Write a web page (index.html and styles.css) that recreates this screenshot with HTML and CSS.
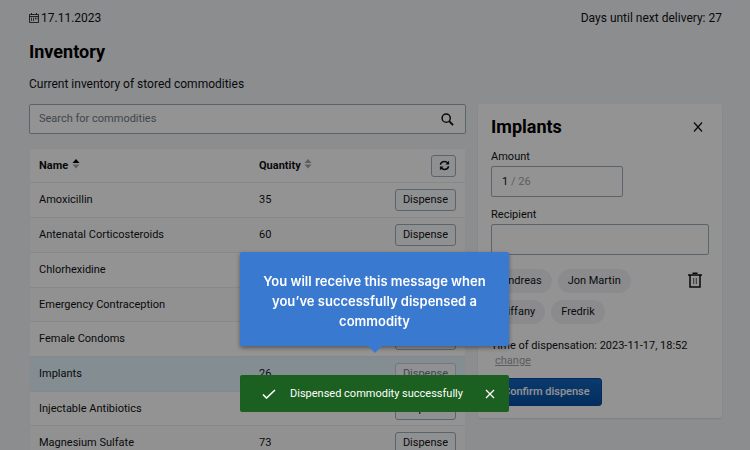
FILE: index.html
```html
<!DOCTYPE html>
<html lang="en">
<head>
<meta charset="utf-8">
<title>Inventory</title>
<link rel="stylesheet" href="styles.css">
</head>
<body>
<main class="page">
  <header class="topbar">
    <span class="date">
      <svg class="icon-cal" viewBox="0 0 10 10" fill="none" stroke="currentColor"><path d="M.5 1.500h9v8h-9zM.5 3.500h9M2.500 0v2M7.500 0v2" stroke-width=".8"/><path d="M2.500 4.500v3.500M4.500 4.500v3.500M6.500 4.500v2M8 4.500v2" stroke-width=".7"/></svg>17.11.2023
    </span>
    <span>Days until next delivery: 27</span>
  </header>
  <h1>Inventory</h1>
  <p class="intro">Current inventory of stored commodities</p>
  <div class="columns">
    <section class="stock">
      <div class="search">
        <input type="search" aria-label="Search for commodities" placeholder="Search for commodities">
        <svg class="icon-search" viewBox="0 0 14 14" fill="none" stroke="currentColor" stroke-width="1.600"><circle cx="5.600" cy="5.600" r="4.400"/><path d="M8.900 8.900 13 13" stroke-width="2"/></svg>
      </div>
      <table class="list">
        <thead>
          <tr>
            <th class="name">Name <svg class="icon-sort" viewBox="0 0 8 10"><path d="M4 0 7.500 4h-7z"/><path class="muted" d="M4 9.500.5 5.500h7z"/></svg></th>
            <th class="qty">Quantity <svg class="icon-sort" viewBox="0 0 8 10"><path class="muted" d="M4 0 7.500 4h-7zM4 9.500.5 5.500h7z"/></svg></th>
            <th class="act"><button class="btn refresh" aria-label="Refresh"><svg class="icon-refresh" viewBox="0 0 12 12" fill="none" stroke="currentColor" stroke-width="1.600"><path d="M1.500 5.200C2 3 3.800 1.700 6 1.700c1.500 0 2.800.7 3.700 1.900M10.500 6.800C10 9 8.200 10.300 6 10.300c-1.500 0-2.800-.7-3.700-1.900"/><path d="M11 .8v4H7zM1 11.200v-4h4z" fill="currentColor" stroke="none"/></svg></button></th>
          </tr>
        </thead>
        <tbody>
          <tr><td>Amoxicillin</td><td>35</td><td class="act"><button class="btn">Dispense</button></td></tr>
          <tr><td>Antenatal Corticosteroids</td><td>60</td><td class="act"><button class="btn">Dispense</button></td></tr>
          <tr><td>Chlorhexidine</td><td></td><td class="act"></td></tr>
          <tr><td>Emergency Contraception</td><td></td><td class="act"></td></tr>
          <tr><td>Female Condoms</td><td></td><td class="act"><button class="btn">Dispense</button></td></tr>
          <tr class="selected"><td>Implants</td><td>26</td><td class="act"><button class="btn" disabled>Dispense</button></td></tr>
          <tr><td>Injectable Antibiotics</td><td></td><td class="act"><button class="btn">Dispense</button></td></tr>
          <tr><td>Magnesium Sulfate</td><td>73</td><td class="act"><button class="btn">Dispense</button></td></tr>
        </tbody>
      </table>
    </section>
    <section class="panel">
      <div class="panel-head">
        <h2>Implants</h2>
        <button class="plain" aria-label="Close"><svg class="icon-x" viewBox="0 0 10 10" fill="none" stroke="currentColor" stroke-width="1.200"><path d="m1 .5 8 9M9 .5l-8 9"/></svg></button>
      </div>
      <label for="amount">Amount</label>
      <div class="field amount"><input id="amount" value="1"><span>/ 26</span></div>
      <label for="recipient">Recipient</label>
      <div class="field"><input id="recipient"></div>
      <div class="people">
        <div class="chips">
          <button class="chip">Andreas</button>
          <button class="chip">Jon Martin</button>
          <button class="chip">Tiffany</button>
          <button class="chip">Fredrik</button>
        </div>
        <button class="plain" aria-label="Clear recipients"><svg class="icon-trash" viewBox="0 0 14 16" fill="none" stroke="currentColor" stroke-width="1.500"><path d="M0 3h14M4.500 1.200h5M2 3v12h10V3"/><path d="M5.700 6v6M8.300 6v6" stroke-width=".7"/></svg></button>
      </div>
      <div class="time">Time of dispensation: 2023-11-17, 18:52<br><a href="#">change</a></div>
      <button class="confirm">Confirm dispense</button>
    </section>
  </div>
</main>
<div class="overlay">
  <div class="callout" role="tooltip">You will receive this message when you’ve successfully dispensed a commodity</div>
  <div class="toast" role="status">
    <svg class="icon-check" viewBox="0 0 14 10" fill="none" stroke="currentColor" stroke-width="1.600"><path d="m1 5.500 3.500 3.500L13 1"/></svg>
    <span>Dispensed commodity successfully</span>
    <button class="plain" aria-label="Dismiss"><svg class="icon-x" viewBox="0 0 10 10" fill="none" stroke="currentColor" stroke-width="1.300"><path d="m1 1 8 8M9 1 1 9"/></svg></button>
  </div>
</div>
</body>
</html>
```
FILE: styles.css
```css
* { box-sizing: border-box; }
html { height: 100%; overflow: hidden; }
body {
  margin: 0;
  height: 100%;
  overflow: hidden;
  background: #f3f5f8;
  color: #101214;
  font: 11px/16px Roboto, sans-serif;
}
button, input { font: inherit; color: inherit; }
button { padding: 0; }
svg { display: block; }
.page { padding: 10px 28px 0 29px; }
.topbar { display: flex; justify-content: space-between; font-size: 12px; }
.date { display: flex; align-items: center; gap: 2px; }
.icon-cal { width: 10px; height: 10px; }
h1, h2 { margin: 0; font-weight: 700; font-size: 18px; line-height: 24px; color: #000; }
h1 { margin-top: 14px; }
.intro { margin: 12px 0; font-size: 12px; }
.columns {
  display: grid;
  grid-template-columns: minmax(0, 43fr) minmax(0, 24fr);
  gap: 12px;
  align-items: start;
}

.search {
  display: flex;
  align-items: center;
  height: 30px;
  padding: 0 11px 0 9px;
  border: 1px solid #a0adba;
  border-radius: 2px;
  background: #fff;
}
.search input { flex: 1; min-width: 0; border: 0; padding: 0; background: none; outline: 0; }
.search input::placeholder { color: #6e7a8a; opacity: 1; }
.icon-search { width: 13px; height: 13px; }

.list {
  width: 100%;
  margin-top: 14px;
  border-collapse: separate;
  border-spacing: 0;
  table-layout: fixed;
  background: #fff;
  border: 1px solid #f0f3f6;
  border-bottom: 0;
}
.list tr { height: 35px; }
.list thead tr { height: 34px; }
.list tbody tr:nth-child(3n + 4) { height: 34px; }
.list th, .list td { padding: 0 9px; border-bottom: 1px solid #e8edf2; text-align: left; }
.list td:nth-child(2), .list .qty { padding-left: 0; }
.list tbody tr:nth-child(even) { background: #fbfcfd; }
.list tbody tr.selected { background: #e5f5fd; }
.list .name { width: 229px; }
.list .act { width: 100px; text-align: right; }
.icon-sort { display: inline-block; width: 8px; height: 10px; margin-left: 1px; }
.icon-sort .muted { fill: #a0a4a8; }
.btn {
  height: 22px;
  padding: 0 7px;
  border: 1px solid #a0adba;
  border-radius: 3px;
  background: #f9fafb;
  font-size: 11px;
  line-height: 20px;
  vertical-align: middle;
}
.btn:disabled { color: #6e7a8a; border-color: #c8d0d8; }
.refresh { width: 25px; }
.icon-refresh { width: 11px; height: 11px; margin: auto; }

.panel {
  padding: 11px 13px 12px;
  border-radius: 3px;
  background: #fff;
  box-shadow: 0 1px 2px #d8dce2;
}
.panel-head { display: flex; justify-content: space-between; align-items: center; margin-bottom: 10px; padding-right: 6px; }
.plain { border: 0; background: none; }
.icon-x { width: 10px; height: 10px; }
.panel label { display: block; }
.field {
  display: flex;
  align-items: center;
  height: 31px;
  margin: 1px 0 10px;
  padding: 0 10px;
  border: 1px solid #a0adba;
  border-radius: 2px;
}
.field input { width: 100%; border: 0; padding: 0; background: none; outline: 0; }
.amount { width: 132px; gap: 2px; color: #a0a4a8; }
.amount input { width: 7px; color: #101214; }
.people { display: flex; justify-content: space-between; align-items: start; margin-top: 14px; padding-right: 7px; }
.people .plain { margin-top: 3px; }
.chips { display: flex; flex-wrap: wrap; gap: 7px 6px; width: 160px; }
.chip { height: 24px; padding: 0 10px; border: 0; border-radius: 12px; background: #f1f2f5; }
.icon-trash { width: 14px; height: 16px; }
.time { margin: 14px 0 10px; line-height: 15px; }
.time a { margin-left: 4px; color: #a0a4a8; }
.confirm {
  height: 28px;
  padding: 0 11px;
  border: 1px solid #0d47a1;
  border-radius: 3px;
  background: linear-gradient(#1565c0, #0650a3);
  color: #fff;
  font-weight: 500;
}

.overlay {
  position: fixed;
  inset: 0;
  display: flex;
  flex-direction: column;
  justify-content: flex-end;
  align-items: center;
  gap: 29px;
  padding: 0 1px 38px 0;
  background: rgba(0, 0, 0, 0.424);
}
.callout {
  position: relative;
  width: 269px;
  padding: 19px 20px 15px;
  border-radius: 2px;
  background: #3a79d0;
  color: #fff;
  font: 600 13px/20px Inter, sans-serif;
  text-align: center;
  box-shadow: 0 2px 4px rgba(0, 0, 0, 0.4);
}
.callout::after {
  content: "";
  position: absolute;
  top: 100%;
  left: 50%;
  margin-left: -7px;
  border: 7px solid transparent;
  border-top-color: #3a79d0;
  border-bottom: 0;
}
.toast {
  display: flex;
  align-items: center;
  gap: 14px;
  width: 269px;
  height: 37px;
  padding: 0 14px 0 22px;
  border-radius: 2px;
  background: #1b6020;
  color: #fff;
}
.toast .plain { margin-left: auto; }
.icon-check { width: 14px; height: 10px; }
```
